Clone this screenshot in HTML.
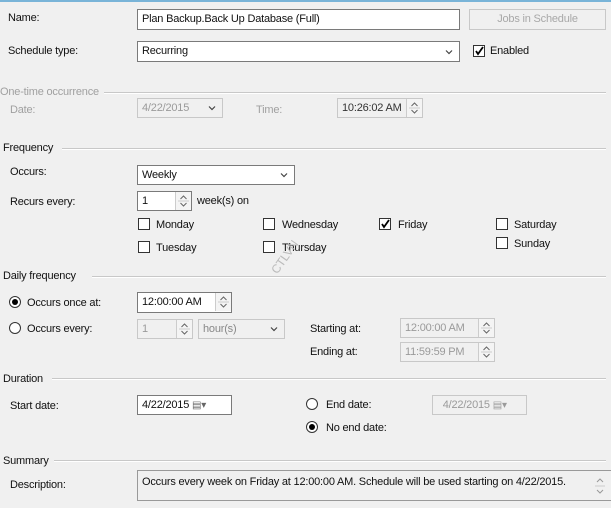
<!DOCTYPE html>
<html><head><style>
body{margin:0;width:611px;height:508px;background:#f0f0f0;position:relative;overflow:hidden;font-family:"Liberation Sans",sans-serif;font-size:11px;letter-spacing:-0.2px;color:#111}
.a{position:absolute;white-space:nowrap}
.l{position:absolute;white-space:nowrap;line-height:14px}
.g{color:#a0a0a0}
.box{position:absolute;background:#fff;border:1px solid #7a7a7a;box-sizing:border-box;padding:2px 4px;line-height:14px;white-space:nowrap;overflow:hidden}
.dis{background:#f0f0f0;border-color:#c8c8c8;color:#9a9a9a}
.hr{position:absolute;height:1px;background:#c8c8c8;border-bottom:1px solid #fff}
.cb{position:absolute;width:12px;height:12px;border:1px solid #333;background:#fff;box-sizing:border-box}
.rd{position:absolute;width:12px;height:12px;border:1px solid #333;border-radius:50%;background:#fff;box-sizing:border-box}
.rd.on::after{content:"";position:absolute;left:2px;top:2px;width:6px;height:6px;border-radius:50%;background:#000}
.dd{position:absolute;right:6px;top:6px;width:8px;height:6px}
.sp{position:absolute;right:0;top:0;bottom:0;width:15px;border-left:1px solid #ccc;background:#f4f4f4}
</style></head><body>
<svg width="0" height="0" style="position:absolute"><defs>
<symbol id="chev" viewBox="0 0 8 6"><path d="M1 1.5 L4 4.5 L7 1.5" stroke="#444" stroke-width="1.2" fill="none"/></symbol>
<symbol id="spin" viewBox="0 0 15 18"><path d="M4.5 7 L7.5 4 L10.5 7 M4.5 11 L7.5 14 L10.5 11" stroke="#666" stroke-width="1" fill="none"/><path d="M2 9 H13" stroke="#ccc"/></symbol>
</defs></svg>
<div class="a" style="left:0;top:0;width:611px;height:2px;background:#79b4d8"></div>

<div class="l" style="left:8px;top:11px">Name:</div>
<div class="box" style="left:137px;top:9px;width:323px;height:21px">Plan Backup.Back Up Database (Full)</div>
<div class="box" style="left:469px;top:9px;width:137px;height:21px;background:#f0f0f0;border-color:#c8c8c8;color:#a8a8a8;text-align:center">Jobs in Schedule</div>

<div class="l" style="left:8px;top:44px">Schedule type:</div>
<div class="box" style="left:137px;top:41px;width:323px;height:21px">Recurring<svg class="dd" style="top:7px"><use href="#chev"/></svg></div>
<div class="cb" style="left:473px;top:45px"><svg width="10" height="10" style="position:absolute;left:0;top:0"><path d="M2 5 L4 8 L9 1" stroke="#000" stroke-width="1.8" fill="none"/></svg></div>
<div class="l" style="left:490px;top:44px">Enabled</div>

<div class="l g" style="left:0;top:85px">One-time occurrence</div>
<div class="hr" style="left:104px;top:92px;width:502px"></div>
<div class="l g" style="left:10px;top:103px">Date:</div>
<div class="box dis" style="left:137px;top:98px;width:86px;height:20px">4/22/2015<svg class="dd"><use href="#chev"/></svg></div>
<div class="l g" style="left:256px;top:103px">Time:</div>
<div class="box dis" style="left:337px;top:98px;width:86px;height:20px;color:#333">10:26:02 AM<svg class="sp" viewBox="0 0 15 18"><use href="#spin"/></svg></div>

<div class="l" style="left:3px;top:141px">Frequency</div>
<div class="hr" style="left:62px;top:148px;width:544px"></div>
<div class="l" style="left:10px;top:165px">Occurs:</div>
<div class="box" style="left:137px;top:165px;width:158px;height:20px">Weekly<svg class="dd"><use href="#chev"/></svg></div>
<div class="l" style="left:10px;top:195px">Recurs every:</div>
<div class="box" style="left:137px;top:191px;width:55px;height:20px">1<svg class="sp" viewBox="0 0 15 18"><use href="#spin"/></svg></div>
<div class="l" style="left:197px;top:194px">week(s) on</div>

<div class="cb" style="left:138px;top:218px"></div><div class="l" style="left:156px;top:218px">Monday</div>
<div class="cb" style="left:138px;top:241px"></div><div class="l" style="left:156px;top:241px">Tuesday</div>
<div class="cb" style="left:263px;top:218px"></div><div class="l" style="left:282px;top:218px">Wednesday</div>
<div class="cb" style="left:263px;top:241px"></div><div class="l" style="left:282px;top:241px">Thursday</div>
<div class="cb" style="left:379px;top:218px"><svg width="10" height="10" style="position:absolute;left:0;top:0"><path d="M2 5 L4 8 L9 1" stroke="#000" stroke-width="1.8" fill="none"/></svg></div><div class="l" style="left:398px;top:218px">Friday</div>
<div class="cb" style="left:496px;top:218px"></div><div class="l" style="left:514px;top:218px">Saturday</div>
<div class="cb" style="left:496px;top:237px"></div><div class="l" style="left:514px;top:237px">Sunday</div>
<div class="a" style="left:266px;top:250px;transform:rotate(-55deg);color:#bbb;font-size:12px">CTLVN</div>

<div class="l" style="left:3px;top:269px">Daily frequency</div>
<div class="hr" style="left:92px;top:276px;width:514px"></div>
<div class="rd on" style="left:9px;top:296px"></div><div class="l" style="left:27px;top:296px">Occurs once at:</div>
<div class="box" style="left:137px;top:292px;width:95px;height:21px">12:00:00 AM<svg class="sp" viewBox="0 0 15 18"><use href="#spin"/></svg></div>
<div class="rd" style="left:9px;top:322px"></div><div class="l" style="left:27px;top:322px">Occurs every:</div>
<div class="box dis" style="left:137px;top:319px;width:56px;height:20px">1<svg class="sp" viewBox="0 0 15 18"><use href="#spin"/></svg></div>
<div class="box dis" style="left:198px;top:319px;width:87px;height:20px;color:#888">hour(s)<svg class="dd"><use href="#chev"/></svg></div>
<div class="l" style="left:310px;top:322px">Starting at:</div>
<div class="box dis" style="left:400px;top:318px;width:95px;height:20px">12:00:00 AM<svg class="sp" viewBox="0 0 15 18"><use href="#spin"/></svg></div>
<div class="l" style="left:310px;top:345px">Ending at:</div>
<div class="box dis" style="left:400px;top:342px;width:95px;height:20px">11:59:59 PM<svg class="sp" viewBox="0 0 15 18"><use href="#spin"/></svg></div>

<div class="l" style="left:3px;top:372px">Duration</div>
<div class="hr" style="left:52px;top:378px;width:554px"></div>
<div class="l" style="left:10px;top:399px">Start date:</div>
<div class="box" style="left:137px;top:395px;width:95px;height:20px">4/22/2015 <span style="color:#666;font-size:10px">&#9636;&#9662;</span></div>
<div class="rd" style="left:306px;top:398px"></div><div class="l" style="left:326px;top:398px">End date:</div>
<div class="box dis" style="left:432px;top:395px;width:95px;height:20px">&nbsp;&nbsp;4/22/2015 <span style="font-size:10px">&#9636;&#9662;</span></div>
<div class="rd on" style="left:306px;top:421px"></div><div class="l" style="left:326px;top:421px">No end date:</div>

<div class="l" style="left:3px;top:454px">Summary</div>
<div class="hr" style="left:54px;top:460px;width:552px"></div>
<div class="l" style="left:10px;top:478px">Description:</div>
<div class="box" style="left:137px;top:470px;width:480px;height:31px;background:#f0f0f0;border-color:#999;padding-top:4px">Occurs every week on Friday at 12:00:00 AM. Schedule will be used starting on 4/22/2015.</div>
<svg style="position:absolute;left:594px;top:473px" width="12" height="26" viewBox="0 0 12 26"><path d="M3 9 L6 6 L9 9 M3 17 L6 20 L9 17" stroke="#999" fill="none"/><path d="M1 13 H11" stroke="#ccc"/></svg>
</body></html>
